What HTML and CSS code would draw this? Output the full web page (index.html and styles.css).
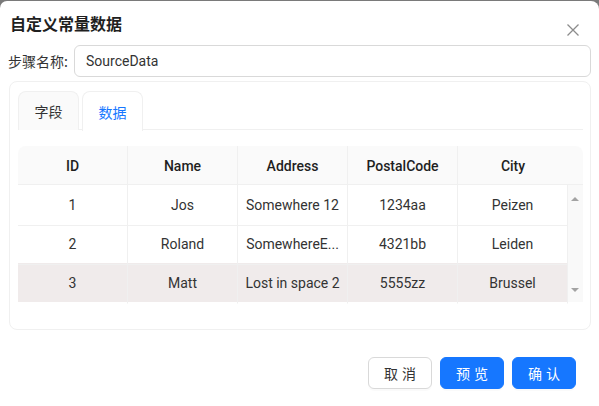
FILE: index.html
```html
<!DOCTYPE html>
<html lang="zh-CN">
<head>
<meta charset="utf-8">
<title>自定义常量数据</title>
<link rel="stylesheet" href="styles.css">
</head>
<body>
<div class="modal">
  <div class="modal-header">
    <div class="modal-title">自定义常量数据</div>
    <button class="close" aria-label="close">
      <svg width="12" height="12" viewBox="0 0 12 12"><path d="M0.5 0.5 L11.5 11.5 M11.5 0.5 L0.5 11.5" stroke="#8c8c8c" stroke-width="1.3" fill="none"/></svg>
    </button>
  </div>
  <div class="form-row">
    <label class="form-label">步骤名称:</label>
    <div class="input">SourceData</div>
  </div>
  <div class="card">
    <div class="tabs">
      <div class="tab">字段</div>
      <div class="tab active">数据</div>
    </div>
    <div class="table">
      <div class="thead">
        <div class="th">ID</div>
        <div class="th">Name</div>
        <div class="th">Address</div>
        <div class="th">PostalCode</div>
        <div class="th last">City</div>
        <div class="th gutter"></div>
      </div>
      <div class="tbody">
        <div class="rows">
          <div class="tr">
            <div class="td">1</div><div class="td">Jos</div><div class="td">Somewhere 12</div><div class="td">1234aa</div><div class="td">Peizen</div>
          </div>
          <div class="tr">
            <div class="td">2</div><div class="td">Roland</div><div class="td" title="SomewhereElse 99">SomewhereE...</div><div class="td">4321bb</div><div class="td">Leiden</div>
          </div>
          <div class="tr hover">
            <div class="td">3</div><div class="td">Matt</div><div class="td">Lost in space 2</div><div class="td">5555zz</div><div class="td">Brussel</div>
          </div>
        </div>
        <div class="scrollbar">
          <span class="arrow up"></span>
          <span class="arrow down"></span>
        </div>
      </div>
    </div>
  </div>
  <div class="footer">
    <button class="btn">取消</button>
    <button class="btn primary">预览</button>
    <button class="btn primary">确认</button>
  </div>
</div>
</body>
</html>
```

FILE: styles.css
```css
* { box-sizing: border-box; }
html, body { margin: 0; padding: 0; }
body {
  background: #7a7a7a;
  width: 599px;
  height: 406px;
  overflow: hidden;
  font-family: Roboto, "Noto Sans CJK SC", sans-serif;
  font-size: 14px;
  color: rgba(0,0,0,0.88);
}
.modal {
  margin-top: 1px;
  height: 405px;
  background: #fff;
  border-radius: 7px 8px 0 0;
  padding: 0 8px 0 9px;
}
.modal-header {
  display: flex;
  justify-content: space-between;
  align-items: flex-start;
  height: 44px;
}
.modal-title {
  margin-top: 11px;
  margin-left: 1px;
  font-size: 16px;
  font-weight: 700;
  line-height: 22px;
  color: #1f1f1f;
  font-family: "Noto Sans CJK SC", sans-serif;
}
.close {
  border: 0;
  background: none;
  padding: 0;
  margin-top: 23px;
  margin-right: 12px;
  width: 12px;
  height: 12px;
  display: flex;
}
.form-row {
  display: flex;
  align-items: center;
  margin-left: -1px;
}
.form-label {
  font-family: "Noto Sans CJK SC", sans-serif;
  font-size: 14px;
  color: #333;
  width: 66px;
  white-space: nowrap;
}
.input {
  flex: 1;
  height: 32px;
  border: 1px solid #d9d9d9;
  border-radius: 6px;
  padding: 0 11px;
  line-height: 30px;
  color: #333;
}
.card {
  margin-top: 4px;
  border: 1px solid #f0f0f0;
  border-radius: 8px;
  padding: 9px 7px 25px 8px;
  height: 249px;
}
.tabs {
  display: flex;
  gap: 3px;
  border-bottom: 1px solid #f0f0f0;
  height: 39px;
}
.tab {
  font-family: "Noto Sans CJK SC", sans-serif;
  width: 61px;
  height: 39px;
  border: 1px solid #f0f0f0;
  border-bottom: 0;
  border-radius: 8px 8px 0 0;
  background: #fafafa;
  display: flex;
  align-items: center;
  justify-content: center;
  color: #333;
  font-size: 14px;
}
.tab.active {
  background: #fff;
  color: #1677ff;
  height: 40px;
}
.table {
  margin-top: 16px;
}
.thead {
  display: grid;
  grid-template-columns: repeat(5, 110px) 1fr;
  background: #fafafa;
  border-radius: 8px 8px 0 0;
  border-bottom: 1px solid #f0f0f0;
  height: 39px;
}
.th {
  display: flex;
  align-items: center;
  justify-content: center;
  font-weight: 500;
  color: #1f1f1f;
  border-right: 1px solid #f0f0f0;
  padding-top: 1px;
}
.th.last, .th.gutter { border-right: 0; }
.tbody {
  display: flex;
}
.rows { flex: 1; }
.tr {
  display: grid;
  grid-template-columns: repeat(5, 1fr);
  height: 39px;
}
.tr.hover { background: #f0ebeb; }
.td {
  display: block;
  text-align: center;
  line-height: 40px;
  border-right: 1px solid #f0f0f0;
  border-bottom: 1px solid #f0f0f0;
  padding: 0 4px;
  white-space: nowrap;
  min-width: 0;
  color: #333;
}
.tr.hover .td { border-bottom-color: transparent; }
.scrollbar {
  width: 15px;
  background: #f9f9f9;
  position: relative;
}
.arrow {
  position: absolute;
  left: 3px;
  width: 0;
  height: 0;
  border-left: 4px solid transparent;
  border-right: 4px solid transparent;
}
.arrow.up { top: 12px; border-bottom: 4px solid #a3a3a3; }
.arrow.down { bottom: 10px; border-top: 4px solid #a3a3a3; }
.footer {
  display: flex;
  justify-content: flex-end;
  gap: 8px;
  margin-top: 27px;
  padding-right: 15px;
}
.btn {
  width: 64px;
  height: 32px;
  border: 1px solid #d9d9d9;
  border-radius: 6px;
  background: #fff;
  color: #333;
  font-family: "Noto Sans CJK SC", sans-serif;
  font-size: 14px;
  letter-spacing: 4px;
  padding: 0 0 0 4px;
  box-shadow: 0 2px 0 rgba(0,0,0,0.02);
}
.btn.primary {
  background: #1677ff;
  border-color: #1677ff;
  color: #fff;
}
```
